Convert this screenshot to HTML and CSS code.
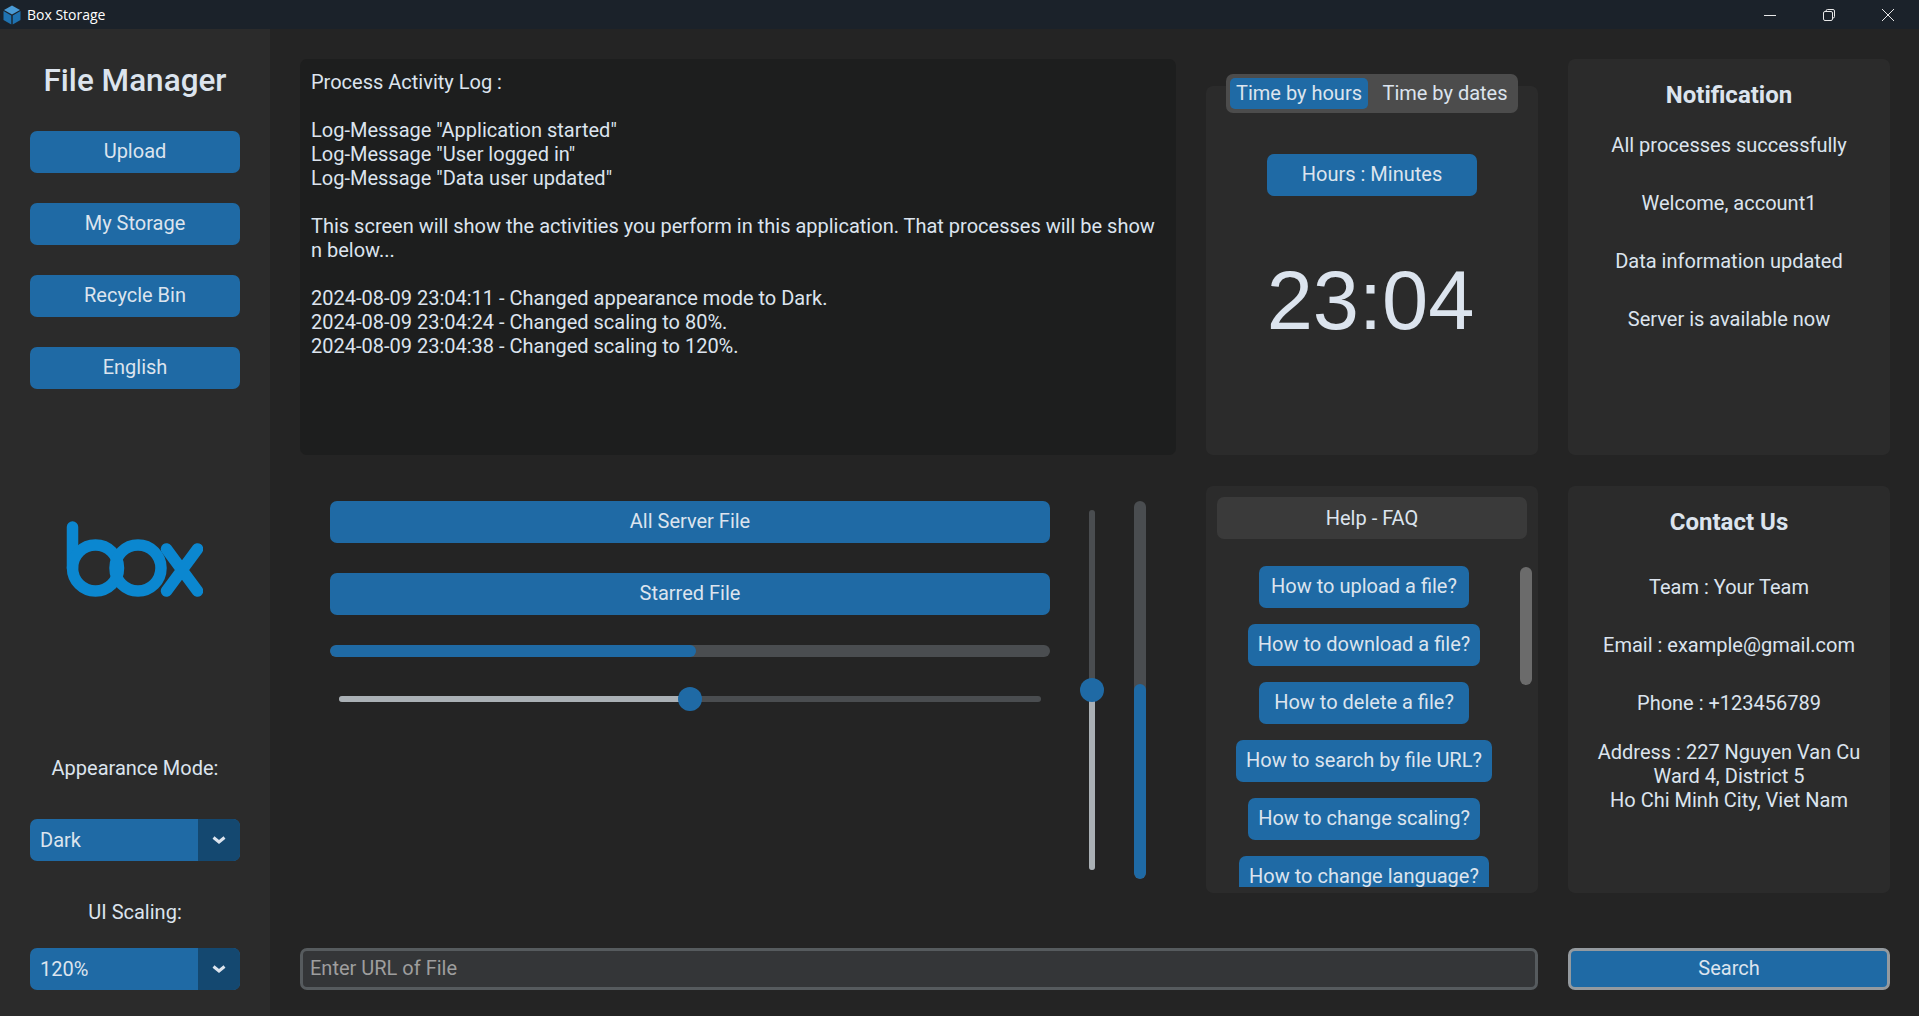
FILE: index.html
```html
<!DOCTYPE html>
<html lang="en">
<head>
<meta charset="utf-8">
<title>Box Storage</title>
<link rel="stylesheet" href="styles.css">
</head>
<body>
<header class="titlebar">
  <svg class="app-icon" viewBox="0 0 18 20" width="18" height="20"><path class="cube-top" d="M9 0.5 17 5 9 9.5 1 5Z"/><path class="cube-side" d="M0.5 6 8.3 10.4V19.5L0.5 15Z"/><path class="cube-side" d="M17.5 6 9.7 10.4V19.5L17.5 15Z"/></svg>
  <span class="app-name">Box Storage</span>
  <div class="win-controls">
    <svg viewBox="0 0 12 12" width="12" height="12"><path d="M0 6.5H12"/></svg>
    <svg viewBox="0 0 12 12" width="12" height="12"><rect x="0.5" y="2.5" width="9" height="9" rx="1.5"/><path d="M3 2.5V2A1.5 1.5 0 0 1 4.5 .5H10A1.5 1.5 0 0 1 11.5 2V7.5A1.5 1.5 0 0 1 10 9H9.5"/></svg>
    <svg viewBox="0 0 12 12" width="12" height="12"><path d="M0 0 12 12M12 0 0 12"/></svg>
  </div>
</header>
<div class="app">
  <aside class="sidebar">
    <h1 class="brand">File Manager</h1>
    <div class="nav">
      <button class="btn">Upload</button>
      <button class="btn">My Storage</button>
      <button class="btn">Recycle Bin</button>
      <button class="btn">English</button>
    </div>
    <svg class="box-logo" viewBox="0 0 140 80" width="140" height="80"><path d="M9.5 6V47"/><circle cx="32.5" cy="47" r="23"/><circle cx="75" cy="47" r="23"/><path d="M103.5 28 134.5 70M134.5 28 103.5 70"/></svg>
    <div class="side-label first">Appearance Mode:</div>
    <div class="select"><span class="select-value">Dark</span><span class="select-arrow"><svg viewBox="0 0 14 8" width="14" height="8"><path d="M1.5 1.5 7 6 12.5 1.5"/></svg></span></div>
    <div class="side-label">UI Scaling:</div>
    <div class="select"><span class="select-value">120%</span><span class="select-arrow"><svg viewBox="0 0 14 8" width="14" height="8"><path d="M1.5 1.5 7 6 12.5 1.5"/></svg></span></div>
  </aside>
  <main class="main">
    <section class="log">Process Activity Log :<br><br>Log-Message "Application started"<br>Log-Message "User logged in"<br>Log-Message "Data user updated"<br><br>This screen will show the activities you perform in this application. That processes will be show<br>n below...<br><br>2024-08-09 23:04:11 - Changed appearance mode to Dark.<br>2024-08-09 23:04:24 - Changed scaling to 80%.<br>2024-08-09 23:04:38 - Changed scaling to 120%.</section>
    <section class="clock-cell">
      <div class="segmented"><span class="seg seg-on">Time by hours</span><span class="seg seg-off">Time by dates</span></div>
      <div class="panel clock-panel">
        <button class="btn">Hours : Minutes</button>
        <div class="clock">23:04</div>
      </div>
    </section>
    <section class="panel info notif">
      <h2 class="info-title">Notification</h2>
      <p>All processes successfully</p>
      <p>Welcome, account1</p>
      <p>Data information updated</p>
      <p>Server is available now</p>
    </section>
    <section class="controls">
      <div class="controls-col">
        <button class="btn">All Server File</button>
        <button class="btn">Starred File</button>
        <div class="progress"><div class="progress-fill"></div></div>
        <div class="hslider"><div class="hslider-fill"></div><div class="thumb"></div></div>
      </div>
      <div class="vslider"><div class="vslider-fill"></div><div class="thumb"></div></div>
      <div class="vprogress"><div class="vprogress-fill"></div></div>
    </section>
    <section class="panel faq">
      <div class="faq-head">Help - FAQ</div>
      <div class="faq-list">
        <button class="btn btn-auto">How to upload a file?</button>
        <button class="btn btn-auto">How to download a file?</button>
        <button class="btn btn-auto">How to delete a file?</button>
        <button class="btn btn-auto">How to search by file URL?</button>
        <button class="btn btn-auto">How to change scaling?</button>
        <button class="btn btn-auto">How to change language?</button>
      </div>
      <div class="scroll-thumb"></div>
    </section>
    <section class="panel info contact">
      <h2 class="info-title">Contact Us</h2>
      <p>Team : Your Team</p>
      <p>Email : example@gmail.com</p>
      <p>Phone : +123456789</p>
      <p class="address">Address : 227 Nguyen Van Cu<br>Ward 4, District 5<br>Ho Chi Minh City, Viet Nam</p>
    </section>
    <div class="search-row">
      <div class="entry">Enter URL of File</div>
      <button class="btn search-btn">Search</button>
    </div>
  </main>
</div>
</body>
</html>
```
FILE: styles.css
```css
* { box-sizing: border-box; }
html, body { margin: 0; height: 100%; }
body { width: 1919px; height: 1016px; overflow: hidden; background: #242424; color: #dce4ee; font-family: Roboto, "Liberation Sans", sans-serif; font-size: 20px; line-height: 24px; }
.titlebar { height: 29px; background: #1b222a; display: flex; align-items: center; padding-left: 3px; }
.app-icon { flex: none; }
.cube-top { fill: #4a9bd6; }
.cube-side { fill: #1f72b0; }
.app-name { margin-left: 6px; font-family: "Open Sans", sans-serif; font-size: 14px; color: #fff; }
.win-controls { margin-left: auto; display: flex; gap: 47px; padding-right: 25px; }
.win-controls svg { display: block; fill: none; stroke: #e8e8e8; stroke-width: 1; }
.app { display: flex; height: 987px; }
.sidebar { width: 270px; flex: none; background: #2b2b2b; padding: 34px 30px 0; display: flex; flex-direction: column; }
.brand { margin: 0; font-size: 31.5px; line-height: 36px; font-weight: 500; text-align: center; white-space: nowrap; }
.nav { margin-top: 32px; display: flex; flex-direction: column; gap: 30px; }
.btn { display: block; width: 100%; height: 42px; border: 0; border-radius: 7px; background: #1f6aa5; color: #dce4ee; font: inherit; padding: 0 0 2px; text-align: center; }
.btn-auto { width: auto; min-width: 210px; padding: 0 10px 2px; flex: none; }
.box-logo { margin: 132px 0 0 33px; flex: none; display: block; fill: none; stroke: #0b87d0; stroke-width: 11.5; stroke-linecap: round; }
.side-label { text-align: center; height: 24px; margin-top: 39px; margin-bottom: 24px; }
.side-label.first { margin-top: 155px; margin-bottom: 39px; }
.select { height: 42px; border-radius: 7px; background: #1f6aa5; display: flex; overflow: hidden; }
.select-value { flex: 1; padding-left: 10px; line-height: 42px; }
.select-arrow { width: 42px; background: #144870; display: flex; align-items: center; justify-content: center; }
.select-arrow svg { fill: none; stroke: #dce4ee; stroke-width: 3; }
.main { flex: 1; padding: 30px 29px 0 30px; display: grid; grid-template-columns: 876px 332px 322px; grid-template-rows: 396px 407px 42px; column-gap: 30px; row-gap: 31px; }
.log { background: #1d1e1e; border-radius: 7px; padding: 11px 11px; white-space: nowrap; }
.panel { background: #2b2b2b; border-radius: 7px; }
.clock-cell { padding-top: 15px; display: flex; flex-direction: column; }
.segmented { position: relative; align-self: center; height: 39px; width: 292px; background: #4c4c4c; border-radius: 7px; padding: 4px; display: flex; }
.seg { flex: 1; height: 31px; line-height: 31px; border-radius: 5px; text-align: center; white-space: nowrap; }
.seg-on { background: #1f6aa5; flex: none; width: 138px; }
.seg-off { padding-left: 8px; }
.clock-panel { flex: 1; margin-top: -27px; padding-top: 68px; display: flex; flex-direction: column; align-items: center; }
.clock-panel .btn { width: 210px; }
.clock { margin-top: 55px; padding-right: 3px; font-family: "Liberation Sans", Arial, sans-serif; font-size: 83px; line-height: 100px; }
.info { text-align: center; padding-top: 23px; }
.info-title { margin: 0; font-size: 24px; line-height: 26px; font-weight: 700; }
.info p { margin: 0; }
.notif p { margin-top: 34px; }
.notif .info-title + p { margin-top: 25px; }
.contact p { margin-top: 34px; }
.contact .info-title + p { margin-top: 40px; }
.contact p.address { margin-top: 25px; }
.controls { display: flex; padding: 15px 0 0 30px; align-items: flex-start; }
.controls-col { width: 720px; flex: none; display: flex; flex-direction: column; gap: 30px; }
.progress { height: 12px; border-radius: 6px; background: #4a4d50; overflow: hidden; }
.progress-fill { width: 366px; height: 100%; background: #1f6aa5; border-radius: 6px; }
.hslider { position: relative; height: 6px; margin: 9px 9px 0; background: #4a4d50; border-radius: 3px; }
.hslider-fill { width: 351px; height: 100%; background: #aab0b5; border-radius: 3px; }
.hslider .thumb { position: absolute; left: 339px; top: -9px; }
.thumb { width: 24px; height: 24px; border-radius: 50%; background: #1f6aa5; }
.vslider { position: relative; flex: none; width: 6px; height: 360px; margin: 9px 0 0 39px; background: #4a4d50; border-radius: 3px; }
.vslider-fill { position: absolute; left: 0; right: 0; bottom: 0; height: 180px; background: #aab0b5; border-radius: 3px; }
.vslider .thumb { position: absolute; left: -9px; top: 168px; }
.vprogress { position: relative; flex: none; width: 12px; height: 378px; margin-left: 39px; background: #4a4d50; border-radius: 6px; overflow: hidden; }
.vprogress-fill { position: absolute; left: 0; right: 0; bottom: 0; height: 195px; background: #1f6aa5; border-radius: 6px; }
.faq { position: relative; padding: 11px 11px 0; display: flex; flex-direction: column; }
.faq-head { height: 42px; line-height: 42px; text-align: center; background: #3a3a3a; border-radius: 7px; flex: none; }
.faq-list { margin: 27px 0 6px; padding-right: 16px; flex: 1; min-height: 0; overflow: hidden; display: flex; flex-direction: column; align-items: center; gap: 16px; }
.scroll-thumb { position: absolute; top: 81px; right: 6px; width: 12px; height: 118px; border-radius: 6px; background: #6b6b6b; }
.search-row { grid-column: 1 / -1; display: flex; gap: 30px; margin-top: 24px; height: 42px; }
.entry { flex: 1; height: 42px; border: 3px solid #565b5e; border-radius: 7px; background: #343638; color: #9e9e9e; line-height: 34px; padding-left: 7px; }
.search-btn { width: 322px; flex: none; border: 3px solid #949a9f; }
```
